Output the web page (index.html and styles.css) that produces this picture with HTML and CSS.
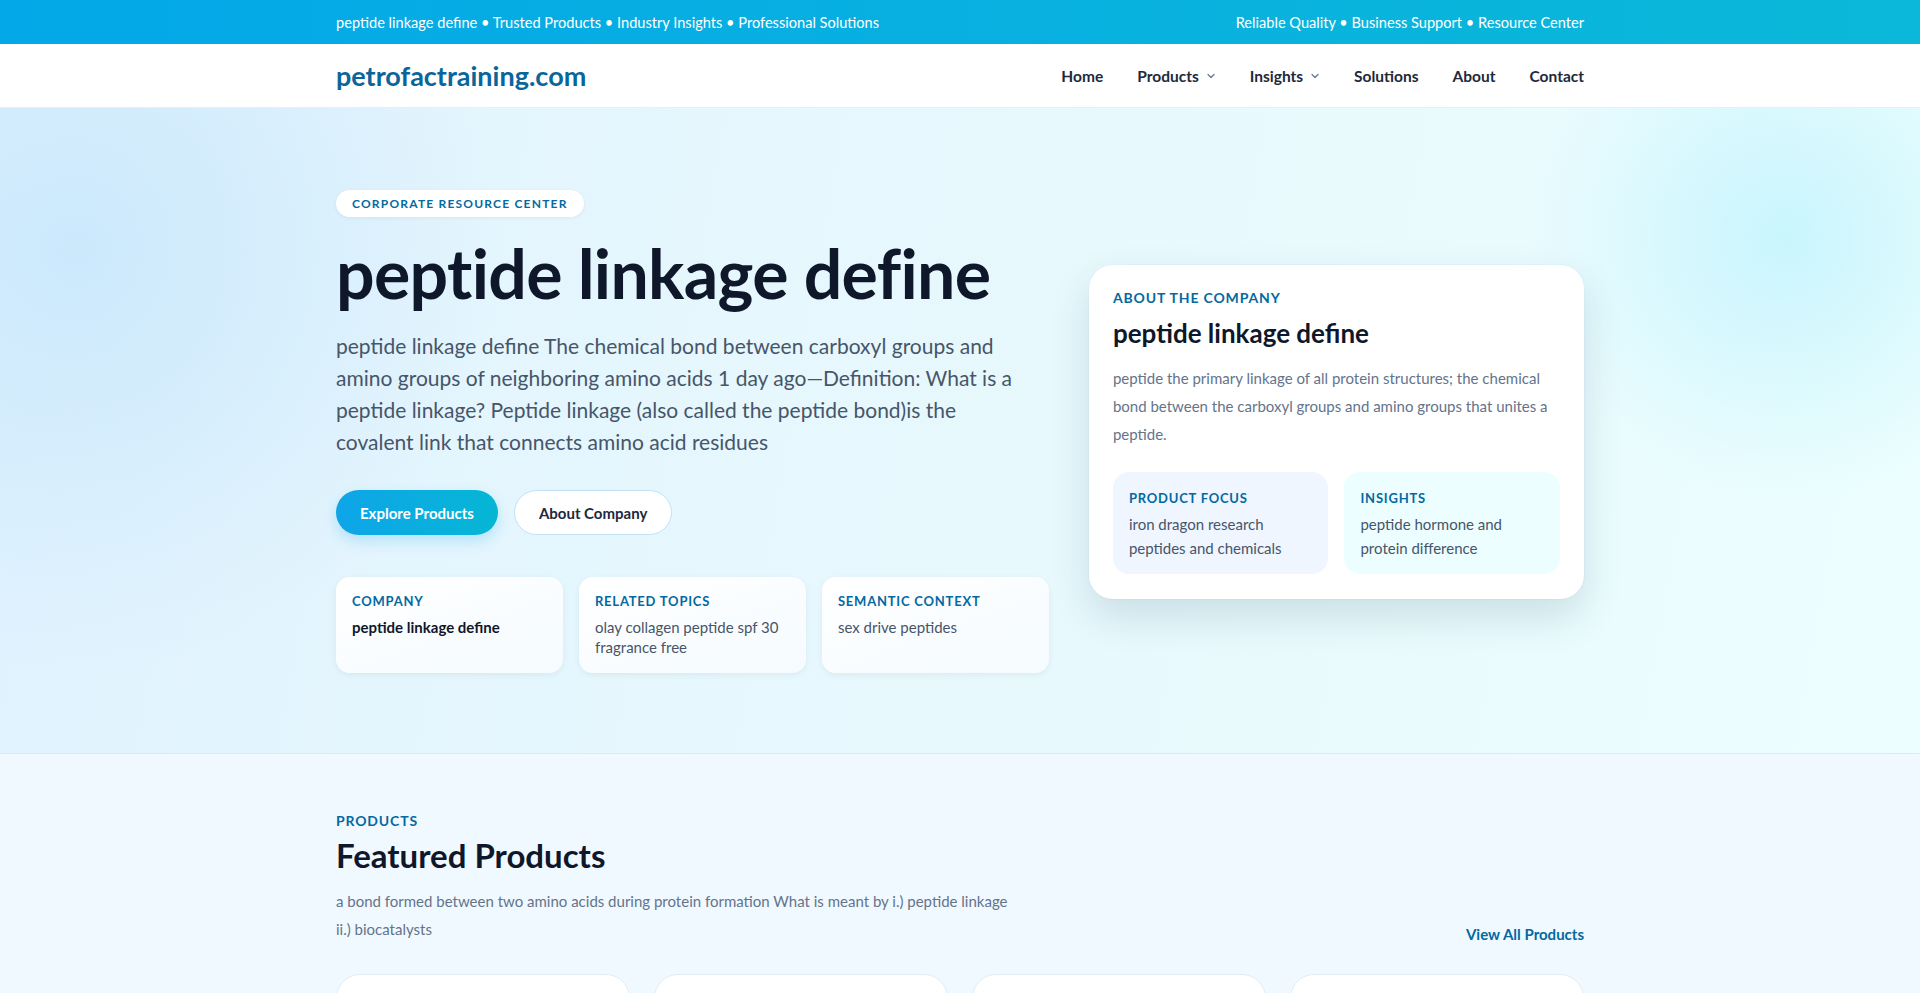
FILE: index.html
```html
<!DOCTYPE html>
<html lang="en">
<head>
    <meta charset="utf-8">
    <title>peptide linkage define - petrofactraining.com</title>
    <link rel="stylesheet" href="styles.css">
</head>
<body>
    <div class="topbar">
        <div class="wrap topbar-inner">
            <span>peptide linkage define &bull; Trusted Products &bull; Industry Insights &bull; Professional Solutions</span>
            <span>Reliable Quality &bull; Business Support &bull; Resource Center</span>
        </div>
    </div>

    <header class="site-header">
        <div class="wrap header-inner">
            <a class="logo" href="#">petrofactraining.com</a>
            <nav class="main-nav">
                <a href="#">Home</a>
                <a href="#" class="has-menu">Products
                    <svg width="10" height="10" viewBox="0 0 10 10"><path d="M2 3.5l3 3 3-3" fill="none" stroke="currentColor" stroke-width="1.2" stroke-linecap="round" stroke-linejoin="round"/></svg>
                </a>
                <a href="#" class="has-menu">Insights
                    <svg width="10" height="10" viewBox="0 0 10 10"><path d="M2 3.5l3 3 3-3" fill="none" stroke="currentColor" stroke-width="1.2" stroke-linecap="round" stroke-linejoin="round"/></svg>
                </a>
                <a href="#">Solutions</a>
                <a href="#">About</a>
                <a href="#">Contact</a>
            </nav>
        </div>
    </header>

    <section class="hero">
        <div class="wrap hero-grid">
            <div class="hero-main">
                <span class="badge">Corporate Resource Center</span>
                <h1>peptide linkage define</h1>
                <p class="lead">peptide linkage define The chemical bond between carboxyl groups and amino groups of neighboring amino acids 1 day ago—Definition: What is a peptide linkage? Peptide linkage (also called the peptide bond)is the covalent link that connects amino acid residues</p>
                <div class="actions">
                    <a href="#" class="btn btn-primary">Explore Products</a>
                    <a href="#" class="btn btn-ghost">About Company</a>
                </div>
                <div class="facts">
                    <div class="fact">
                        <div class="label">Company</div>
                        <div class="fact-value strong">peptide linkage define</div>
                    </div>
                    <div class="fact">
                        <div class="label">Related Topics</div>
                        <div class="fact-value">olay collagen peptide spf 30 fragrance free</div>
                    </div>
                    <div class="fact">
                        <div class="label">Semantic Context</div>
                        <div class="fact-value">sex drive peptides</div>
                    </div>
                </div>
            </div>

            <aside class="about-card">
                <div class="label label-lg">About the Company</div>
                <h2>peptide linkage define</h2>
                <p>peptide the primary linkage of all protein structures; the chemical bond between the carboxyl groups and amino groups that unites a peptide.</p>
                <div class="about-boxes">
                    <div class="about-box blue">
                        <div class="label">Product Focus</div>
                        <div class="box-text">iron dragon research peptides and chemicals</div>
                    </div>
                    <div class="about-box cyan">
                        <div class="label">Insights</div>
                        <div class="box-text">peptide hormone and protein difference</div>
                    </div>
                </div>
            </aside>
        </div>
    </section>

    <section class="products">
        <div class="wrap">
            <div class="section-head">
                <div>
                    <div class="label label-lg">Products</div>
                    <h2 class="section-title">Featured Products</h2>
                    <p class="section-desc">a bond formed between two amino acids during protein formation What is meant by i.) peptide linkage ii.) biocatalysts</p>
                </div>
                <a href="#" class="more-link">View All Products</a>
            </div>
            <div class="product-grid">
                <div class="product-card">
                    <div class="label">Product</div>
                    <h3>peptide bond formation</h3>
                    <p>Condensation of amino acids into peptide chains.</p>
                </div>
                <div class="product-card">
                    <div class="label">Product</div>
                    <h3>amino acid residues</h3>
                    <p>Building blocks linked by covalent bonds.</p>
                </div>
                <div class="product-card">
                    <div class="label">Product</div>
                    <h3>protein structures</h3>
                    <p>Primary linkage shared by all proteins.</p>
                </div>
                <div class="product-card">
                    <div class="label">Product</div>
                    <h3>biocatalysts</h3>
                    <p>Enzymes that speed up chemical reactions.</p>
                </div>
            </div>
        </div>
    </section>
</body>
</html>
```

FILE: styles.css
```css
* {
    box-sizing: border-box;
}
body {
    margin: 0;
    font-family: "Lato", "Noto Sans", sans-serif;
    color: #0f172a;
    background: #f0f9ff;
}
a {
    text-decoration: none;
    color: inherit;
}
.wrap {
    width: 1248px;
    margin: 0 auto;
}

/* top strip */
.topbar {
    background: linear-gradient(90deg, #03a8e8, #0bb8d8);
    color: #fff;
    font-size: 14.6px;
}
.topbar-inner {
    height: 44px;
    display: flex;
    align-items: center;
    justify-content: space-between;
}

/* header */
.site-header {
    background: #fff;
    border-bottom: 1px solid #e2f0f7;
}
.header-inner {
    height: 63px;
    display: flex;
    align-items: center;
    justify-content: space-between;
}
.logo {
    font-size: 27px;
    font-weight: 700;
    color: #0a659c;
}
.main-nav {
    display: flex;
    gap: 34px;
    font-size: 15.5px;
    font-weight: 700;
    color: #1e293b;
}
.main-nav a {
    display: flex;
    align-items: center;
    gap: 7px;
}
.main-nav svg {
    color: #64748b;
}

/* hero */
.hero {
    background:
        radial-gradient(circle at 4% 22%, rgba(186, 224, 250, 0.55), transparent 22%),
        radial-gradient(circle at 93% 20%, rgba(178, 240, 252, 0.6), transparent 14%),
        linear-gradient(100deg, #e0f2fe 0%, #e8f9fd 55%, #ecfeff 100%);
    border-bottom: 1px solid #dbeaf2;
    padding: 82px 0 80px;
}
.hero-grid {
    display: grid;
    grid-template-columns: minmax(0, 1.44fr) minmax(0, 1fr);
    gap: 40px;
    align-items: center;
}
.badge {
    display: inline-block;
    background: #fff;
    color: #0369a1;
    font-size: 12px;
    font-weight: 700;
    letter-spacing: 0.1em;
    text-transform: uppercase;
    padding: 6px 16px;
    border-radius: 999px;
    box-shadow: 0 1px 4px rgba(15, 23, 42, 0.06);
}
.hero h1 {
    font-size: 68px;
    line-height: 75px;
    font-weight: 700;
    letter-spacing: -0.01em;
    margin: 18px 0 20px;
    color: #0f172a;
}
.lead {
    max-width: 690px;
    font-size: 21px;
    line-height: 32px;
    color: #475569;
    margin: 0;
}
.actions {
    display: flex;
    gap: 16px;
    margin-top: 32px;
}
.btn {
    height: 45px;
    padding: 0 24px;
    border-radius: 999px;
    display: inline-flex;
    align-items: center;
    font-size: 15px;
    font-weight: 700;
}
.btn-primary {
    background: linear-gradient(90deg, #0ea5e9, #06b6d4);
    color: #fff;
    box-shadow: 0 6px 14px rgba(14, 165, 233, 0.22);
}
.btn-ghost {
    background: #fff;
    color: #1e293b;
    border: 1px solid #bfe3f5;
}
.facts {
    display: grid;
    grid-template-columns: repeat(3, 1fr);
    gap: 16px;
    margin-top: 42px;
}
.fact {
    background: linear-gradient(160deg, #fff, #f5fbff);
    border-radius: 14px;
    padding: 16px;
    min-height: 94px;
    box-shadow: 0 2px 6px rgba(15, 23, 42, 0.06);
}
.label {
    font-size: 13px;
    font-weight: 700;
    letter-spacing: 0.06em;
    text-transform: uppercase;
    color: #0369a1;
}
.label-lg {
    font-size: 14px;
}
.fact-value {
    margin-top: 8px;
    font-size: 15px;
    line-height: 20px;
    color: #475569;
}
.fact-value.strong {
    font-weight: 700;
    color: #0f172a;
}

/* card on the right */
.about-card {
    background: #fff;
    border-radius: 24px;
    padding: 24px 24px 25px;
    box-shadow: 0 18px 40px rgba(15, 60, 80, 0.14), 0 0 0 1px rgba(224, 242, 254, 0.6);
}
.about-card h2 {
    font-size: 26px;
    line-height: 34px;
    margin: 10px 0 14px;
}
.about-card p {
    font-size: 15px;
    line-height: 28px;
    color: #64748b;
    margin: 0 0 24px;
}
.about-boxes {
    display: grid;
    grid-template-columns: 1fr 1fr;
    gap: 16px;
}
.about-box {
    border-radius: 16px;
    padding: 18px 16px 14px;
}
.about-box.blue {
    background: #eff6ff;
}
.about-box.cyan {
    background: #ecfeff;
}
.box-text {
    margin-top: 6px;
    font-size: 15px;
    line-height: 24px;
    color: #475569;
}

/* products */
.products {
    padding: 58px 0 60px;
}
.section-head {
    display: flex;
    justify-content: space-between;
    align-items: flex-end;
}
.section-title {
    font-size: 33px;
    line-height: 42px;
    margin: 5px 0 11px;
}
.section-desc {
    max-width: 690px;
    margin: 0;
    font-size: 15px;
    line-height: 28px;
    color: #64748b;
}
.more-link {
    font-size: 15px;
    font-weight: 700;
    color: #0369a1;
}
.product-grid {
    display: grid;
    grid-template-columns: repeat(4, 1fr);
    gap: 24px;
    margin-top: 31px;
}
.product-card {
    background: #fff;
    border: 1px solid #e2edf3;
    border-radius: 24px;
    padding: 32px 24px 24px;
    min-height: 200px;
}
.product-card h3 {
    font-size: 20px;
    margin: 10px 0 8px;
}
.product-card p {
    margin: 0;
    font-size: 15px;
    line-height: 24px;
    color: #64748b;
}
```
